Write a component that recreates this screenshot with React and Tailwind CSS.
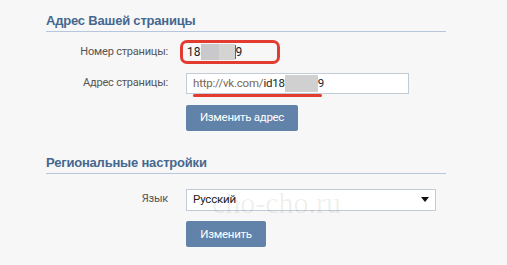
import React from "react";

function Heading({ children }) {
  return (
    <div
      className="pt-[13px] pb-[2px] border-b border-[#b7c6dc] text-[13px] leading-[16px] font-bold tracking-[-0.2px] text-[#45678f]"
      style={{ fontFamily: '"Liberation Sans", Arial, sans-serif' }}
    >
      {children}
    </div>
  );
}

function Row({ label, children, className = "" }) {
  return (
    <div className={"flex items-center " + className}>
      <div className="w-[124px] shrink-0 text-right pr-[2px] text-[11px] tracking-[-0.2px] text-[#555]">{label}</div>
      <div className="ml-[16px]">{children}</div>
    </div>
  );
}

function Btn({ children, w }) {
  return (
    <button className={"h-[26px] rounded-[2px] bg-[#6283a9] text-white text-[11.5px] tracking-[-0.3px] " + w}>
      {children}
    </button>
  );
}

export default function App() {
  return (
    <div
      className="relative w-[507px] h-[265px] bg-[#f7f7f7] overflow-hidden"
      style={{ fontFamily: 'Roboto, "Liberation Sans", sans-serif' }}
    >
      <div className="pl-[46px] w-[446px]">
        <Heading>Адрес Вашей страницы</Heading>

        <Row label="Номер страницы:" className="mt-[8px]">
          <div className="-ml-[6px] w-[100px] h-[24px] border-[3px] border-[#e23c30] rounded-[7px] flex items-center pl-[4px] text-[12px] text-[#222]">
            <span>18</span>
            <span className="w-[18px] h-[16px] bg-[#c9c8ca]"></span>
            <span className="w-[16px] h-[16px] bg-[#d4d4d2]"></span>
            <span className="w-[1px] h-[14px] bg-[#3d6aa8]"></span>
            <span>9</span>
          </div>
        </Row>

        <Row label="Адрес страницы:" className="mt-[9px]">
          <div className="relative w-[223px] h-[21px] bg-white border border-[#c2ccd7] flex items-center pl-[6px] text-[11.5px] tracking-[-0.2px]">
            <span className="text-[#7a6650]">http://vk.com/</span>
            <span className="text-[#222]">id18</span>
            <span className="w-[33px] h-[17px] bg-[#d0d0d0]"></span>
            <span className="text-[#222]">9</span>
            <div className="absolute left-[6px] top-[20px] w-[129px] h-[3px] rounded-full bg-[#e23c30]"></div>
          </div>
        </Row>

        <div className="ml-[140px] mt-[10px]">
          <Btn w="w-[112px]">Изменить адрес</Btn>
        </div>

        <div className="mt-[11px]">
          <Heading>Региональные настройки</Heading>
        </div>

        <Row label="Язык" className="mt-[15px]">
          <div className="w-[250px] h-[22px] bg-white border border-[#c2ccd7] flex items-center justify-between pl-[6px] pr-[6px] text-[11.5px] tracking-[-0.2px] text-[#222]">
            <span>Русский</span>
            <svg width="8" height="5" viewBox="0 0 8 5"><path d="M0 0H8L4 5Z" fill="#111" /></svg>
          </div>
        </Row>

        <div className="ml-[140px] mt-[10px]">
          <Btn w="w-[80px]">Изменить</Btn>
        </div>
      </div>

      <div
        className="absolute left-[212px] top-[188px] text-[30px] leading-[30px] text-black/[0.07] pointer-events-none"
        style={{ fontFamily: '"Liberation Serif", serif' }}
      >
        cho-cho.ru
      </div>
    </div>
  );
}
